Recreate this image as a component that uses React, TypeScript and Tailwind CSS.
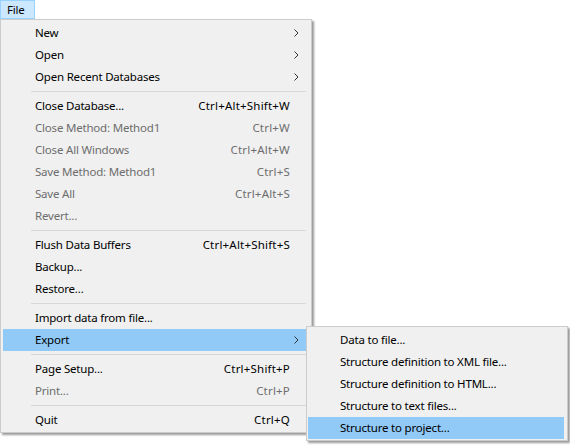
type Item =
  | { sep: true }
  | { label: string; shortcut?: string; sub?: boolean; disabled?: boolean; active?: boolean };

const fileMenu: Item[] = [
  { label: "New", sub: true },
  { label: "Open", sub: true },
  { label: "Open Recent Databases", sub: true },
  { sep: true },
  { label: "Close Database...", shortcut: "Ctrl+Alt+Shift+W" },
  { label: "Close Method: Method1", shortcut: "Ctrl+W", disabled: true },
  { label: "Close All Windows", shortcut: "Ctrl+Alt+W", disabled: true },
  { label: "Save Method: Method1", shortcut: "Ctrl+S", disabled: true },
  { label: "Save All", shortcut: "Ctrl+Alt+S", disabled: true },
  { label: "Revert...", disabled: true },
  { sep: true },
  { label: "Flush Data Buffers", shortcut: "Ctrl+Alt+Shift+S" },
  { label: "Backup..." },
  { label: "Restore..." },
  { sep: true },
  { label: "Import data from file..." },
  { label: "Export", sub: true, active: true },
  { sep: true },
  { label: "Page Setup...", shortcut: "Ctrl+Shift+P" },
  { label: "Print...", shortcut: "Ctrl+P", disabled: true },
  { sep: true },
  { label: "Quit", shortcut: "Ctrl+Q" },
];

const exportMenu = [
  "Data to file...",
  "Structure definition to XML file...",
  "Structure definition to HTML...",
  "Structure to text files...",
  "Structure to project...",
];

function Chevron() {
  return (
    <svg width="5" height="8" viewBox="0 0 5 8" className="ml-[4px]">
      <path d="M0.5 0.5 L4 4 L0.5 7.5" fill="none" stroke="#333" strokeWidth="1" />
    </svg>
  );
}

function MenuRow({ item }: { item: Item }) {
  if ("sep" in item) {
    return (
      <div className="h-[7px] flex items-center">
        <div className="ml-[28px] w-[277px] h-px bg-[#d7d7d7]" />
      </div>
    );
  }
  return (
    <div
      className={`h-[22px] flex items-center pl-[32px] ${item.active ? "bg-[#91c9f7]" : ""} ${
        item.disabled ? "text-[#6d6d6d]" : "text-black"
      }`}
    >
      <span className="flex-1 whitespace-nowrap">{item.label}</span>
      {item.shortcut && <span className="whitespace-nowrap tracking-[0.2px]">{item.shortcut}</span>}
      <span className="w-[16px] flex items-center">{item.sub && <Chevron />}</span>
    </div>
  );
}

export default function App() {
  return (
    <div className="relative w-[570px] h-[446px] bg-white text-[11.5px] tracking-[-0.2px] leading-none font-['Noto_Sans','Open_Sans',sans-serif] overflow-hidden">
      <div className="h-[19px] flex">
        <div className="w-[35px] h-[19px] bg-[#cce8ff] border border-[#99d1ff] flex items-center pl-[6px]">
          File
        </div>
      </div>

      <div className="absolute left-0 top-[19px] w-[312px] bg-[#f0f0f0] border border-[#cccccc] pt-[2px] pb-[1px] pl-[2px] pr-[5px] shadow-[2px_2px_2px_rgba(0,0,0,0.4)]">
        {fileMenu.map((it, i) => (
          <MenuRow key={i} item={it} />
        ))}
      </div>

      <div className="absolute left-[306px] top-[326px] w-[262px] bg-[#f0f0f0] border border-[#cccccc] pt-[2px] pb-[1px] pl-[1px] pr-[3px] shadow-[2px_2px_2px_rgba(0,0,0,0.4)]">
        {exportMenu.map((label, i) => (
          <div
            key={label}
            className={`h-[22px] flex items-center pl-[32px] whitespace-nowrap ${
              i === exportMenu.length - 1 ? "bg-[#91c9f7]" : ""
            }`}
          >
            {label}
          </div>
        ))}
      </div>
    </div>
  );
}
